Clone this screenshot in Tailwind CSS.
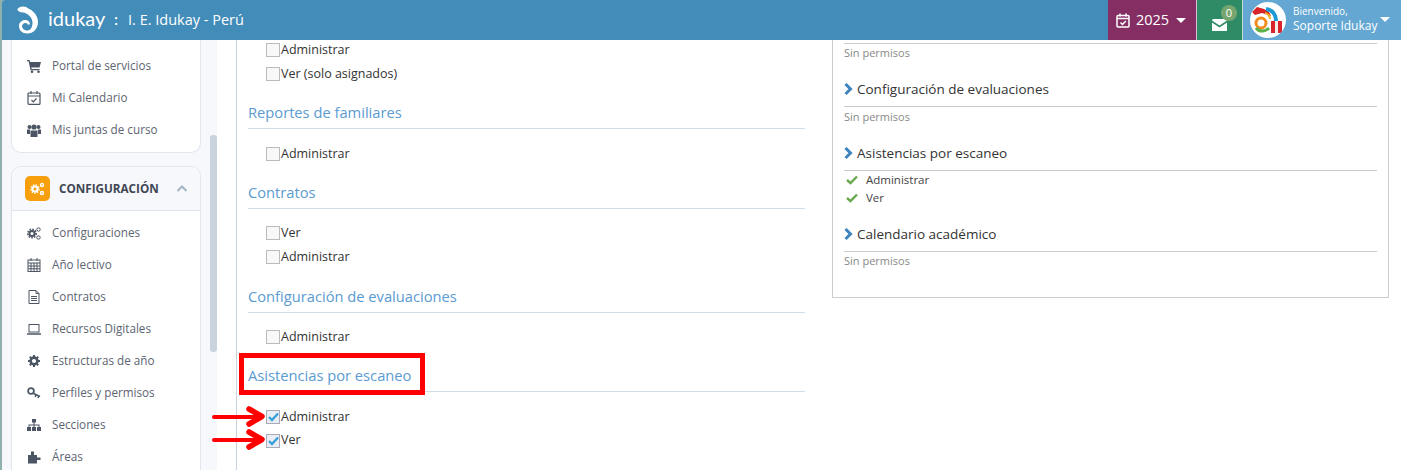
<!DOCTYPE html>
<html lang="es">
<head>
<meta charset="UTF-8">
<title>Idukay - Perfiles y permisos</title>
<script src="https://cdn.jsdelivr.net/npm/@tailwindcss/browser@4"></script>
</head>
<body class="bg-white font-['Open_Sans',sans-serif] text-[#333]">
<div class="relative w-[1401px] h-[470px] overflow-hidden flex flex-col bg-[#8fb1ae]">

  <!-- Barra superior -->
  <header class="h-[40px] shrink-0 ml-[2px] rounded-tl-[4px] bg-[#428cb9] flex items-stretch text-white">
    <div class="w-[1106px] flex items-center pl-[15px]">
      <svg class="w-[22px] h-[29px] mr-[9px] mt-[-2px]" viewBox="0 0 22 29" fill="none">
        <ellipse cx="6" cy="4.500" rx="5.500" ry="3" fill="#fff"/>
        <path d="M6 2 C14 3 21 9 21 17 C21 24 16 28.500 10.500 28.500 C5 28.500 2 25 2 21 C2 17.500 5 15 8 15 C11 15 13 17 13 19.500 L10.500 19.500 C10.500 18.500 9.500 18 8.500 18 C6.500 18 5 19.500 5 21 C5 23.500 7.500 25.500 10.500 25.500 C13.500 25.500 15.500 22 15.500 18 C15.500 12 11 9 6 7Z" fill="#fff"/>
      </svg>
      <span class="font-['Lato',sans-serif] text-[20px] leading-none w-[57px] mt-[-4px]">idukay</span>
      <span class="ml-[9px] w-[14px] text-[15px] font-semibold mt-[-1px]">:</span>
      <span class="text-[14.5px] mt-[-1px]">I. E. Idukay - Perú</span>
    </div>
    <div class="w-[89px] bg-[#842e63] flex items-center pl-[8px] text-[14.5px] gap-[6px] border-r border-white/70">
      <svg class="w-[14px] h-[15px]" viewBox="0 0 14 15" fill="none" stroke="#fff" stroke-width="1.500"><rect x="1" y="2.500" width="12" height="11.500" rx="1"/><path d="M1 5.500H13M4 .5V3.500M10 .5V3.500"/><path d="M4.500 9.500L6.500 11.500L9.800 8"/></svg>
      <span>2025</span>
      <span class="ml-[1px] w-0 h-0 border-x-[5px] border-x-transparent border-t-[5px] border-t-white"></span>
    </div>
    <div class="relative w-[46px] bg-[#2f8a66] border-r border-white/70">
      <svg class="absolute left-[15px] top-[19px] w-[15px] h-[12px]" viewBox="0 0 15 12" fill="#fff"><path d="M0 1.500A1.500 1.500 0 0 1 1.500 0H13.500A1.500 1.500 0 0 1 15 1.500L7.500 6.500L0 1.500Z"/><path d="M0 3.500L7.500 8.500L15 3.500V12H0Z"/></svg>
      <span class="absolute left-[24px] top-[5px] w-[16px] h-[16px] rounded-full bg-[#76a670] text-[11px] leading-[16px] text-center">0</span>
    </div>
    <div class="relative flex-1 bg-[#64a7d2] flex items-center pl-[7px]">
      <div class="w-[36px] h-[36px] rounded-full bg-white shrink-0 overflow-hidden">
        <svg viewBox="0 0 36 36" class="w-full h-full" fill="none">
          <path d="M2 10L7 5L14 7L19 10L21 14L12 11L5 13Z" fill="#d8232a"/>
          <path d="M16 7C23 8 26 13 26 19" stroke="#1c9ad6" stroke-width="4"/>
          <path d="M15 11C18 12 20 14 20 17" stroke="#f0b323" stroke-width="2"/>
          <circle cx="11" cy="21" r="5" stroke="#f28c1e" stroke-width="3"/>
          <path d="M6 26C9 30 15 30 19 26" stroke="#5bb04a" stroke-width="3"/>
          <rect x="21" y="19" width="4" height="12" fill="#d8232a"/><rect x="25" y="19" width="3" height="12" fill="#f4ece6"/><rect x="28" y="19" width="4" height="12" fill="#d8232a"/>
        </svg>
      </div>
      <div class="ml-[7px] leading-none mt-[-3px]">
        <div class="text-[10px] mb-[4px]">Bienvenido,</div>
        <div class="text-[12px]">Soporte Idukay</div>
      </div>
      <span class="absolute right-[11px] top-[17px] w-0 h-0 border-x-[5px] border-x-transparent border-t-[5px] border-t-white"></span>
    </div>
  </header>

  <div class="flex flex-1 min-h-0 bg-white">

    <!-- Menu lateral -->
    <aside class="w-[237px] shrink-0 flex overflow-hidden border-r border-[#c9d3dd] border-l-2 border-l-[#8fb1ae]">
      <div class="w-[208px] shrink-0 bg-[#f6f8fb] pl-[9px] pr-[9px] text-[#5d6470] text-[11.700px]">
        <div class="bg-white border border-t-0 border-[#e1e6ed] rounded-b-[10px] h-[113px] pt-[10px] pl-[15px]">
          <div class="h-[32px] flex items-center">
            <svg class="w-[14px] h-[13px] mr-[11px]" viewBox="0 0 14 13" fill="#4c5563"><path d="M0 0H2.500L3 2H14L12.500 7.500H4.300L4.600 9H12.500V10.300H3.500L1.600 1.300H0Z"/><circle cx="5" cy="11.700" r="1.300"/><circle cx="11.500" cy="11.700" r="1.300"/></svg>
            Portal de servicios
          </div>
          <div class="h-[32px] flex items-center">
            <svg class="w-[14px] h-[14px] mr-[11px]" viewBox="0 0 14 14" fill="none" stroke="#4c5563" stroke-width="1.200"><rect x="1" y="2" width="12" height="11.400" rx="1"/><path d="M1 5H13M4 0V3M10 0V3M4.500 9L6.300 10.800L9.500 7.500"/></svg>
            Mi Calendario
          </div>
          <div class="h-[32px] flex items-center">
            <svg class="w-[14px] h-[13px] mr-[11px]" viewBox="0 0 14 13" fill="#4c5563"><circle cx="2.500" cy="3" r="2"/><circle cx="11.500" cy="3" r="2"/><circle cx="7" cy="3" r="2.600"/><path d="M0 5.500H3V10H0ZM11 5.500H14V10H11Z"/><path d="M3.500 6.500H10.500V13H3.500Z"/></svg>
            Mis juntas de curso
          </div>
        </div>
        <div class="mt-[13px] bg-white border border-[#e1e6ed] rounded-t-[10px] h-[400px]">
          <div class="h-[44px] bg-[#f6f8fb] border-b border-[#e1e6ed] rounded-t-[10px] flex items-center pl-[13px]">
            <span class="w-[25px] h-[25px] rounded-[5px] bg-[#f89f0e] flex items-center justify-center">
              <svg class="w-[15px] h-[14px]" viewBox="0 0 15 14" fill="none" stroke="#fff"><circle cx="5" cy="7" r="2.500" stroke-width="2"/><circle cx="5" cy="7" r="4" stroke-width="1.500" stroke-dasharray="1.500 1.200"/><circle cx="12" cy="3" r="1.500" stroke-width="1.400"/><circle cx="12" cy="11" r="1.500" stroke-width="1.400"/></svg>
            </span>
            <span class="ml-[9px] w-[118px] text-[11.700px] font-bold text-[#3f4754]">CONFIGURACIÓN</span>
            <svg class="w-[10px] h-[7px]" viewBox="0 0 10 7" fill="none" stroke="#a7b4c2" stroke-width="2"><path d="M.5 6L5 1.500L9.500 6"/></svg>
          </div>
          <div class="pl-[15px] pt-[6px]">
            <div class="h-[32px] flex items-center">
              <svg class="w-[14px] h-[13px] mr-[11px]" viewBox="0 0 14 13" fill="none" stroke="#4c5563"><circle cx="5" cy="6.500" r="2.600" stroke-width="2"/><circle cx="5" cy="6.500" r="4.200" stroke-width="1.600" stroke-dasharray="1.600 1.200"/><circle cx="11.500" cy="2.500" r="1.700"/><circle cx="11.500" cy="10.500" r="1.700"/></svg>
              Configuraciones
            </div>
            <div class="h-[32px] flex items-center">
              <svg class="w-[14px] h-[14px] mr-[11px]" viewBox="0 0 14 14" fill="none" stroke="#4c5563"><rect x="1" y="2" width="12" height="11.500"/><path d="M1 5H13M1 8H13M1 10.800H13M4 5V13M7 5V13M10 5V13M4 0V3M10 0V3"/></svg>
              Año lectivo
            </div>
            <div class="h-[32px] flex items-center">
              <svg class="w-[14px] h-[14px] mr-[11px]" viewBox="0 0 14 14" fill="none" stroke="#4c5563"><path d="M2 .5H9L12 3.500V13.500H2Z"/><path d="M9 .5V3.500H12M4 6.500H10M4 8.500H10M4 10.500H10"/></svg>
              Contratos
            </div>
            <div class="h-[32px] flex items-center">
              <svg class="w-[14px] h-[11px] mr-[11px]" viewBox="0 0 14 11" fill="none" stroke="#4c5563"><rect x="2" y=".5" width="10" height="7.500"/><path d="M0 10H14" stroke-width="1.500"/></svg>
              Recursos Digitales
            </div>
            <div class="h-[32px] flex items-center">
              <svg class="w-[14px] h-[14px] mr-[11px]" viewBox="0 0 14 14" fill="none" stroke="#4c5563"><circle cx="7" cy="7" r="3.400" stroke-width="2.600"/><path d="M7 1V3M7 11V13M1 7H3M11 7H13M2.800 2.800L4.200 4.200M9.800 9.800L11.200 11.200M11.200 2.800L9.800 4.200M4.200 9.800L2.800 11.200" stroke-width="2"/></svg>
              Estructuras de año
            </div>
            <div class="h-[32px] flex items-center">
              <svg class="w-[14px] h-[13px] mr-[11px]" viewBox="0 0 14 13" fill="none" stroke="#4c5563"><circle cx="4" cy="4" r="2.900" stroke-width="1.800"/><path d="M6.500 6.500L13 9.500M9 7.600L8.200 10M11.500 8.800L11 11" stroke-width="1.500"/></svg>
              Perfiles y permisos
            </div>
            <div class="h-[32px] flex items-center">
              <svg class="w-[14px] h-[12px] mr-[11px]" viewBox="0 0 14 12" fill="#4c5563"><rect x="5" y="0" width="4" height="3.500"/><rect x="0" y="8" width="4" height="4"/><rect x="5" y="8" width="4" height="4"/><rect x="10" y="8" width="4" height="4"/><path d="M6.500 3H7.500V5.500H12.500V8H11.500V6.500H7.500V8H6.500V6.500H2.500V8H1.500V5.500H6.500Z"/></svg>
              Secciones
            </div>
            <div class="h-[32px] flex items-center">
              <svg class="w-[14px] h-[13px] mr-[11px]" viewBox="0 0 14 13" fill="#4c5563"><path d="M1 4H4V.5H7V4H10V6.500H13.500V9H10V12.500H1Z"/></svg>
              Áreas
            </div>
          </div>
        </div>
      </div>
      <div class="w-[7px] shrink-0 bg-[#f6f8fb] pt-[95px]">
        <div class="h-[217px] bg-[#c8d3dd] rounded-[3px]"></div>
      </div>
      <div class="flex-1 bg-white"></div>
    </aside>

    <!-- Permisos por marcar -->
    <main class="w-[569px] shrink-0 pl-[11px]">
      <div class="w-[557px] mt-[-2px] text-[12.500px] text-[#333]">
        <div class="pl-[18px]">
          <label class="h-[24px] flex items-center"><span class="w-[14px] h-[14px] border border-[#bbb] bg-[#f8f8f8] mr-[1px]"></span>Administrar</label>
          <label class="h-[24px] flex items-center"><span class="w-[14px] h-[14px] border border-[#bbb] bg-[#f8f8f8] mr-[1px]"></span>Ver (solo asignados)</label>
        </div>
        <h3 class="mt-[14px] h-[29px] border-b border-[#cfdde8] text-[14.700px] leading-[24px] text-[#5b9bd1]">Reportes de familiares</h3>
        <div class="pl-[18px] pt-[13px]">
          <label class="h-[24px] flex items-center"><span class="w-[14px] h-[14px] border border-[#bbb] bg-[#f8f8f8] mr-[1px]"></span>Administrar</label>
        </div>
        <h3 class="mt-[14px] h-[29px] border-b border-[#cfdde8] text-[14.700px] leading-[24px] text-[#5b9bd1]">Contratos</h3>
        <div class="pl-[18px] pt-[12px]">
          <label class="h-[24px] flex items-center"><span class="w-[14px] h-[14px] border border-[#bbb] bg-[#f8f8f8] mr-[1px]"></span>Ver</label>
          <label class="h-[24px] flex items-center"><span class="w-[14px] h-[14px] border border-[#bbb] bg-[#f8f8f8] mr-[1px]"></span>Administrar</label>
        </div>
        <h3 class="mt-[15px] h-[29px] border-b border-[#cfdde8] text-[14.700px] leading-[24px] text-[#5b9bd1]">Configuración de evaluaciones</h3>
        <div class="pl-[18px] pt-[12px]">
          <label class="h-[24px] flex items-center"><span class="w-[14px] h-[14px] border border-[#bbb] bg-[#f8f8f8] mr-[1px]"></span>Administrar</label>
        </div>
        <h3 class="mt-[14px] h-[29px] border-b border-[#cfdde8] text-[14.700px] leading-[24px] text-[#5b9bd1]">Asistencias por escaneo</h3>
        <div class="pl-[18px] pt-[13px]">
          <label class="h-[24px] flex items-center"><span class="relative w-[14px] h-[14px] border border-[#aab] bg-[#e8eef4] mr-[1px]"><svg class="absolute left-[1px] top-[1px] w-[11px] h-[10px]" viewBox="0 0 11 10" fill="none" stroke="#3ba1d8" stroke-width="2.400"><path d="M1 5L4 8L10 1.500"/></svg></span>Administrar</label>
          <label class="h-[23px] flex items-center"><span class="relative w-[14px] h-[14px] border border-[#aab] bg-[#e8eef4] mr-[1px]"><svg class="absolute left-[1px] top-[1px] w-[11px] h-[10px]" viewBox="0 0 11 10" fill="none" stroke="#3ba1d8" stroke-width="2.400"><path d="M1 5L4 8L10 1.500"/></svg></span>Ver</label>
        </div>
      </div>
    </main>

    <!-- Resumen -->
    <section class="w-[557px] h-[258px] ml-[26px] border border-t-0 border-[#ccc] px-[11px] text-[#333] shrink-0">
      <div class="h-[4px] border-b border-[#ccc]"></div>
      <p class="h-[17px] text-[11px] leading-[17px] text-[#888]">Sin permisos</p>
      <h4 class="mt-[17px] h-[29px] border-b border-[#ccc] text-[13.500px] leading-[22px] flex items-start">
        <svg class="w-[9px] h-[12px] mr-[4px] mt-[5px]" viewBox="0 0 9 12" fill="none" stroke="#3f84bf" stroke-width="3"><path d="M1.500 1L6.500 6L1.500 11"/></svg>Configuración de evaluaciones
      </h4>
      <p class="h-[17px] text-[11px] leading-[19px] text-[#888]">Sin permisos</p>
      <h4 class="mt-[18px] h-[29px] border-b border-[#ccc] text-[13.500px] leading-[22px] flex items-start">
        <svg class="w-[9px] h-[12px] mr-[4px] mt-[5px]" viewBox="0 0 9 12" fill="none" stroke="#3f84bf" stroke-width="3"><path d="M1.500 1L6.500 6L1.500 11"/></svg>Asistencias por escaneo
      </h4>
      <ul class="text-[11.500px] leading-[18px] text-[#444]">
        <li class="flex items-center h-[18px]"><svg class="ml-[2px] mr-[8px] w-[12px] h-[10px]" viewBox="0 0 12 10" fill="none" stroke="#6aa84f" stroke-width="2.400"><path d="M1 5L4.500 8L11 1.500"/></svg>Administrar</li>
        <li class="flex items-center h-[18px]"><svg class="ml-[2px] mr-[8px] w-[12px] h-[10px]" viewBox="0 0 12 10" fill="none" stroke="#6aa84f" stroke-width="2.400"><path d="M1 5L4.500 8L11 1.500"/></svg>Ver</li>
      </ul>
      <h4 class="mt-[16px] h-[29px] border-b border-[#ccc] text-[13.500px] leading-[22px] flex items-start">
        <svg class="w-[9px] h-[12px] mr-[4px] mt-[5px]" viewBox="0 0 9 12" fill="none" stroke="#3f84bf" stroke-width="3"><path d="M1.500 1L6.500 6L1.500 11"/></svg>Calendario académico
      </h4>
      <p class="h-[17px] text-[11px] leading-[17px] text-[#888]">Sin permisos</p>
    </section>
  </div>

  <!-- Anotaciones en rojo -->
  <div class="absolute left-[239px] top-[353px] w-[186px] h-[42px] border-[5px] border-[#ff0000]"></div>
  <svg class="absolute left-[212px] top-[405px] w-[54px] h-[46px]" viewBox="0 0 54 46" fill="none" stroke="#ff0000" stroke-linecap="round" stroke-linejoin="round">
    <path d="M2 12H48" stroke-width="4"/><path d="M37 4L50 11.500L37 19" stroke-width="5.500"/>
    <path d="M2 35H48" stroke-width="4"/><path d="M37 27L50 34.500L37 42" stroke-width="5.500"/>
  </svg>
</div>
</body>
</html>
